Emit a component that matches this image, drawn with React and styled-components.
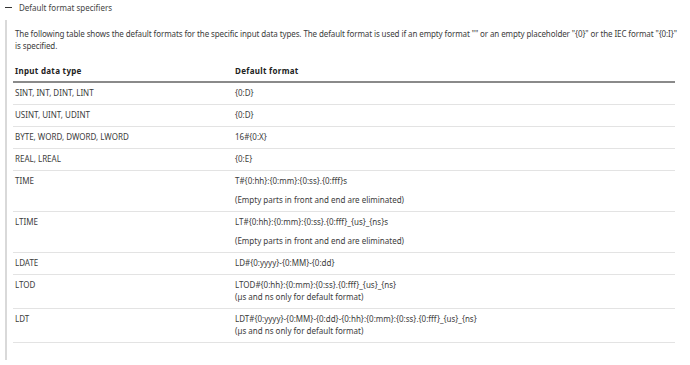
import React from "react";
import styled, { createGlobalStyle } from "styled-components";

const Global = createGlobalStyle`
  html, body { margin: 0; padding: 0; background: #fff; }
  body { font-family: "Noto Sans", "Open Sans", sans-serif; color: #3c3c3c; }
`;

const Page = styled.div`
  width: 690px;
  height: 365px;
  padding: 1px 0 0 5px;
  box-sizing: border-box;
  overflow: hidden;
`;

const Heading = styled.div`
  display: flex;
  align-items: center;
  gap: 7px;
  height: 13px;
  font-size: 8px;
  color: #444;
`;

const Dash = styled.span`
  display: block;
  width: 7px;
  height: 1.5px;
  background: #333;
`;

const Section = styled.div`
  margin-top: 6px;
  border-left: 2px solid #d9d9d9;
  padding: 8px 10px 18px 6px;
  height: 340px;
  box-sizing: border-box;
`;

const Intro = styled.p`
  margin: 0 0 10px 2px;
  font-size: 8px;
  line-height: 12px;
  letter-spacing: -0.1px;
  width: 662px;
`;

const Table = styled.table`
  width: 662px;
  border-collapse: collapse;
  font-size: 8px;
  line-height: 12px;
`;

const Th = styled.th`
  text-align: left;
  font-weight: 700;
  letter-spacing: 0.3px;
  color: #222;
  padding: 3px 2px 4px;
  border-bottom: 2px solid #8a8a8a;
  width: ${(p) => p.$w || "auto"};
`;

const Td = styled.td`
  vertical-align: top;
  padding: 4px 2px 5px;
  border-bottom: 1px solid #e3e3e3;
`;

const Line = styled.div`
  &:not(:first-child) {
    margin-top: ${(p) => (p.$tight ? "0" : "7px")};
  }
`;

const rows = [
  ["SINT, INT, DINT, LINT", ["{0:D}"]],
  ["USINT, UINT, UDINT", ["{0:D}"]],
  ["BYTE, WORD, DWORD, LWORD", ["16#{0:X}"]],
  ["REAL, LREAL", ["{0:E}"]],
  ["TIME", ["T#{0:hh}:{0:mm}:{0:ss}.{0:fff}s", "(Empty parts in front and end are eliminated)"]],
  ["LTIME", ["LT#{0:hh}:{0:mm}:{0:ss}.{0:fff}_{us}_{ns}s", "(Empty parts in front and end are eliminated)"]],
  ["LDATE", ["LD#{0:yyyy}-{0:MM}-{0:dd}"]],
  ["LTOD", ["LTOD#{0:hh}:{0:mm}:{0:ss}.{0:fff}_{us}_{ns}", "(µs and ns only for default format)"], true],
  ["LDT", ["LDT#{0:yyyy}-{0:MM}-{0:dd}-{0:hh}:{0:mm}:{0:ss}.{0:fff}_{us}_{ns}", "(µs and ns only for default format)"], true],
];

export default function App() {
  return (
    <Page>
      <Global />
      <Heading>
        <Dash />
        <span>Default format specifiers</span>
      </Heading>
      <Section>
        <Intro>
          The following table shows the default formats for the specific input data types. The default format is used if an empty format "" or an empty placeholder "{"{0}"}" or the IEC format "{"{0:I}"}" is specified.
        </Intro>
        <Table>
          <thead>
            <tr>
              <Th $w="216px">Input data type</Th>
              <Th>Default format</Th>
            </tr>
          </thead>
          <tbody>
            {rows.map(([type, fmts, tight]) => (
              <tr key={type}>
                <Td>{type}</Td>
                <Td>
                  {fmts.map((f) => (
                    <Line key={f} $tight={tight}>{f}</Line>
                  ))}
                </Td>
              </tr>
            ))}
          </tbody>
        </Table>
      </Section>
    </Page>
  );
}
